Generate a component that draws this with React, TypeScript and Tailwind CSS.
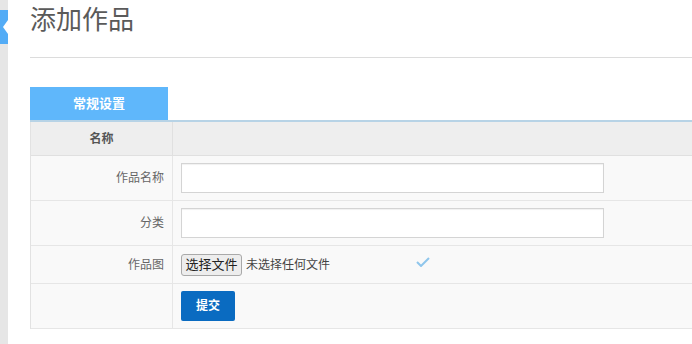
import { Fragment } from 'react'

const font = { fontFamily: '"Liberation Sans", "Noto Sans CJK SC", sans-serif' }

const rows = [
  { label: '作品名称', kind: 'text', h: 'h-[45px]' },
  { label: '分类', kind: 'text', h: 'h-[45px]' },
  { label: '作品图', kind: 'file', h: 'h-[38px]' },
  { label: '', kind: 'submit', h: 'h-[45px]' },
]

function SideStrip() {
  return (
    <div className="w-[8px] shrink-0 bg-[#e6e6e6] h-[344px] flex flex-col">
      <div className="h-[10px]" />
      {/* blue tab with arrow notch */}
      <svg width="8" height="34" viewBox="0 0 8 34" className="block">
        <rect width="8" height="34" fill="#53acf6" />
        <polygon points="8,10 3,17 8,24" fill="#ffffff" />
      </svg>
    </div>
  )
}

function Field({ kind }: { kind: string }) {
  if (kind === 'text') {
    return <input className="w-[423px] h-[30px] bg-white border border-[#d4d4d4] shadow-[inset_0_1px_1px_rgba(0,0,0,0.06)] outline-none" />
  }
  if (kind === 'file') {
    return (
      <div className="flex items-center">
        <button className="w-[61px] h-[22px] text-[13px] text-[#222] bg-[#ededed] border border-[#a9a9a9] rounded-[3px] leading-none">选择文件</button>
        <span className="ml-[4px] text-[12px] text-[#444]">未选择任何文件</span>
        <svg width="14" height="10" viewBox="0 0 14 10" className="ml-[86px] -mt-[6px]">
          <polyline points="1,5 5,9 13,1" fill="none" stroke="#8fc6ec" strokeWidth="2" />
        </svg>
      </div>
    )
  }
  return (
    <button className="w-[54px] h-[30px] bg-[#0a6bc1] text-white text-[12px] font-bold rounded-[2px]">提交</button>
  )
}

export default function App() {
  return (
    <div className="w-[692px] h-[344px] overflow-hidden bg-white flex" style={font}>
      <SideStrip />
      <div className="flex-1 pl-[22px] min-w-0">
        <h1 className="text-[26px] leading-[34px] pt-[3px] text-[#5a5a5a] font-normal">添加作品</h1>
        <div className="h-px bg-[#dcdcdc] mt-[20px] w-[700px]" />
        <div className="mt-[29px] w-[700px]">
          <div className="flex border-b-2 border-[#b7d3e6]">
            <div className="w-[138px] h-[33px] bg-[#5fb7fb] text-white text-[13px] font-bold flex items-center justify-center">常规设置</div>
          </div>
          <div className="border-l border-[#e2e2e2] grid grid-cols-[142px_1fr]">
            <div className="h-[34px] bg-[#eeeeee] border-b border-r border-[#e0e0e0] flex items-center justify-center text-[12px] font-bold text-[#555]">名称</div>
            <div className="h-[34px] bg-[#eeeeee] border-b border-[#e0e0e0]" />
            {rows.map((r, i) => (
              <Fragment key={i}>
                <div className={`${r.h} bg-[#f9f9f9] border-b border-r border-[#e6e6e6] flex items-center justify-end pr-[8px] text-[12px] text-[#666]`}>{r.label}</div>
                <div className={`${r.h} bg-[#f9f9f9] border-b border-[#e6e6e6] flex items-center pl-[8px]`}>
                  <Field kind={r.kind} />
                </div>
              </Fragment>
            ))}
          </div>
        </div>
      </div>
    </div>
  )
}
